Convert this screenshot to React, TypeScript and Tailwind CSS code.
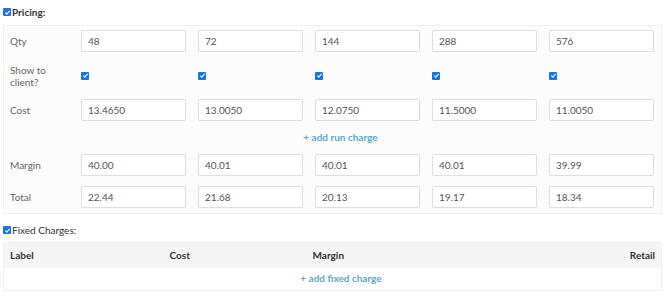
import type { ReactNode } from "react";

const QTYS = ["48", "72", "144", "288", "576"];
const COSTS = ["13.4650", "13.0050", "12.0750", "11.5000", "11.0050"];
const MARGINS = ["40.00", "40.01", "40.01", "40.01", "39.99"];
const TOTALS = ["22.44", "21.68", "20.13", "19.17", "18.34"];

function Check() {
  return (
    <span className="inline-flex h-[8px] w-[8px] shrink-0 items-center justify-center rounded-[1px] bg-[#1a73e8]">
      <svg viewBox="0 0 8 8" className="h-[7px] w-[7px]">
        <path d="M1.6 4.2 L3.2 5.8 L6.4 2.2" fill="none" stroke="white" strokeWidth="1.3" />
      </svg>
    </span>
  );
}

function Field({ value }: { value: string }) {
  return (
    <input
      readOnly
      value={value}
      className="h-[22px] w-[105px] rounded-[2px] border border-[#dcdfe3] bg-white px-[6px] text-[10px] text-[#555] outline-none"
    />
  );
}

function Label({ children }: { children: ReactNode }) {
  return <div className="text-[10px] leading-[12px] text-[#666]">{children}</div>;
}

function InputRow({ label, values }: { label: string; values: string[] }) {
  return (
    <>
      <Label>{label}</Label>
      {values.map((v, i) => (
        <Field key={i} value={v} />
      ))}
    </>
  );
}

export default function App() {
  return (
    <div className="h-[296px] w-[670px] bg-white px-[3px] pt-[7px] font-['Lato',sans-serif]">
      <div className="flex items-center gap-[1px] text-[10px] font-bold leading-[10px] text-[#333]">
        <Check />
        <span>Pricing:</span>
      </div>

      <div className="mt-[8px] w-[659px] border border-[#f0f0f0] bg-[#fcfcfc] px-[6px] pb-[5px] pt-[4px]">
        <div className="grid grid-cols-[59px_repeat(5,105px)] items-center gap-x-3 gap-y-[10px]">
          <InputRow label="Qty" values={QTYS} />

          <div className="flex h-[27px] items-center">
            <Label>
              Show to
              <br />
              client?
            </Label>
          </div>
          {QTYS.map((q) => (
            <div key={q} className="flex items-center">
              <Check />
            </div>
          ))}

          <InputRow label="Cost" values={COSTS} />

          <div className="col-span-6 flex h-[13px] items-center justify-center pl-[17px]">
            <a className="cursor-pointer text-[10px] font-bold text-[#5fa8c6]">+ add run charge</a>
          </div>

          <InputRow label="Margin" values={MARGINS} />
          <InputRow label="Total" values={TOTALS} />
        </div>
      </div>

      <div className="mt-[11px] flex items-center gap-[1px] text-[10px] leading-[10px] text-[#333]">
        <Check />
        <span>Fixed Charges:</span>
      </div>

      <table className="mt-[7px] w-[659px] border border-[#f0f0f0] text-[10px]">
        <thead>
          <tr className="h-[25px] bg-[#f5f5f5] text-left font-bold text-[#333]">
            <th className="w-[160px] px-[6px]">Label</th>
            <th className="w-[143px] px-[6px]">Cost</th>
            <th className="px-[6px]">Margin</th>
            <th className="px-[6px] text-right">Retail</th>
          </tr>
        </thead>
        <tbody>
          <tr className="h-[23px]">
            <td colSpan={4} className="pl-[17px] text-center">
              <a className="cursor-pointer font-bold text-[#5fa8c6]">+ add fixed charge</a>
            </td>
          </tr>
        </tbody>
      </table>
    </div>
  );
}
